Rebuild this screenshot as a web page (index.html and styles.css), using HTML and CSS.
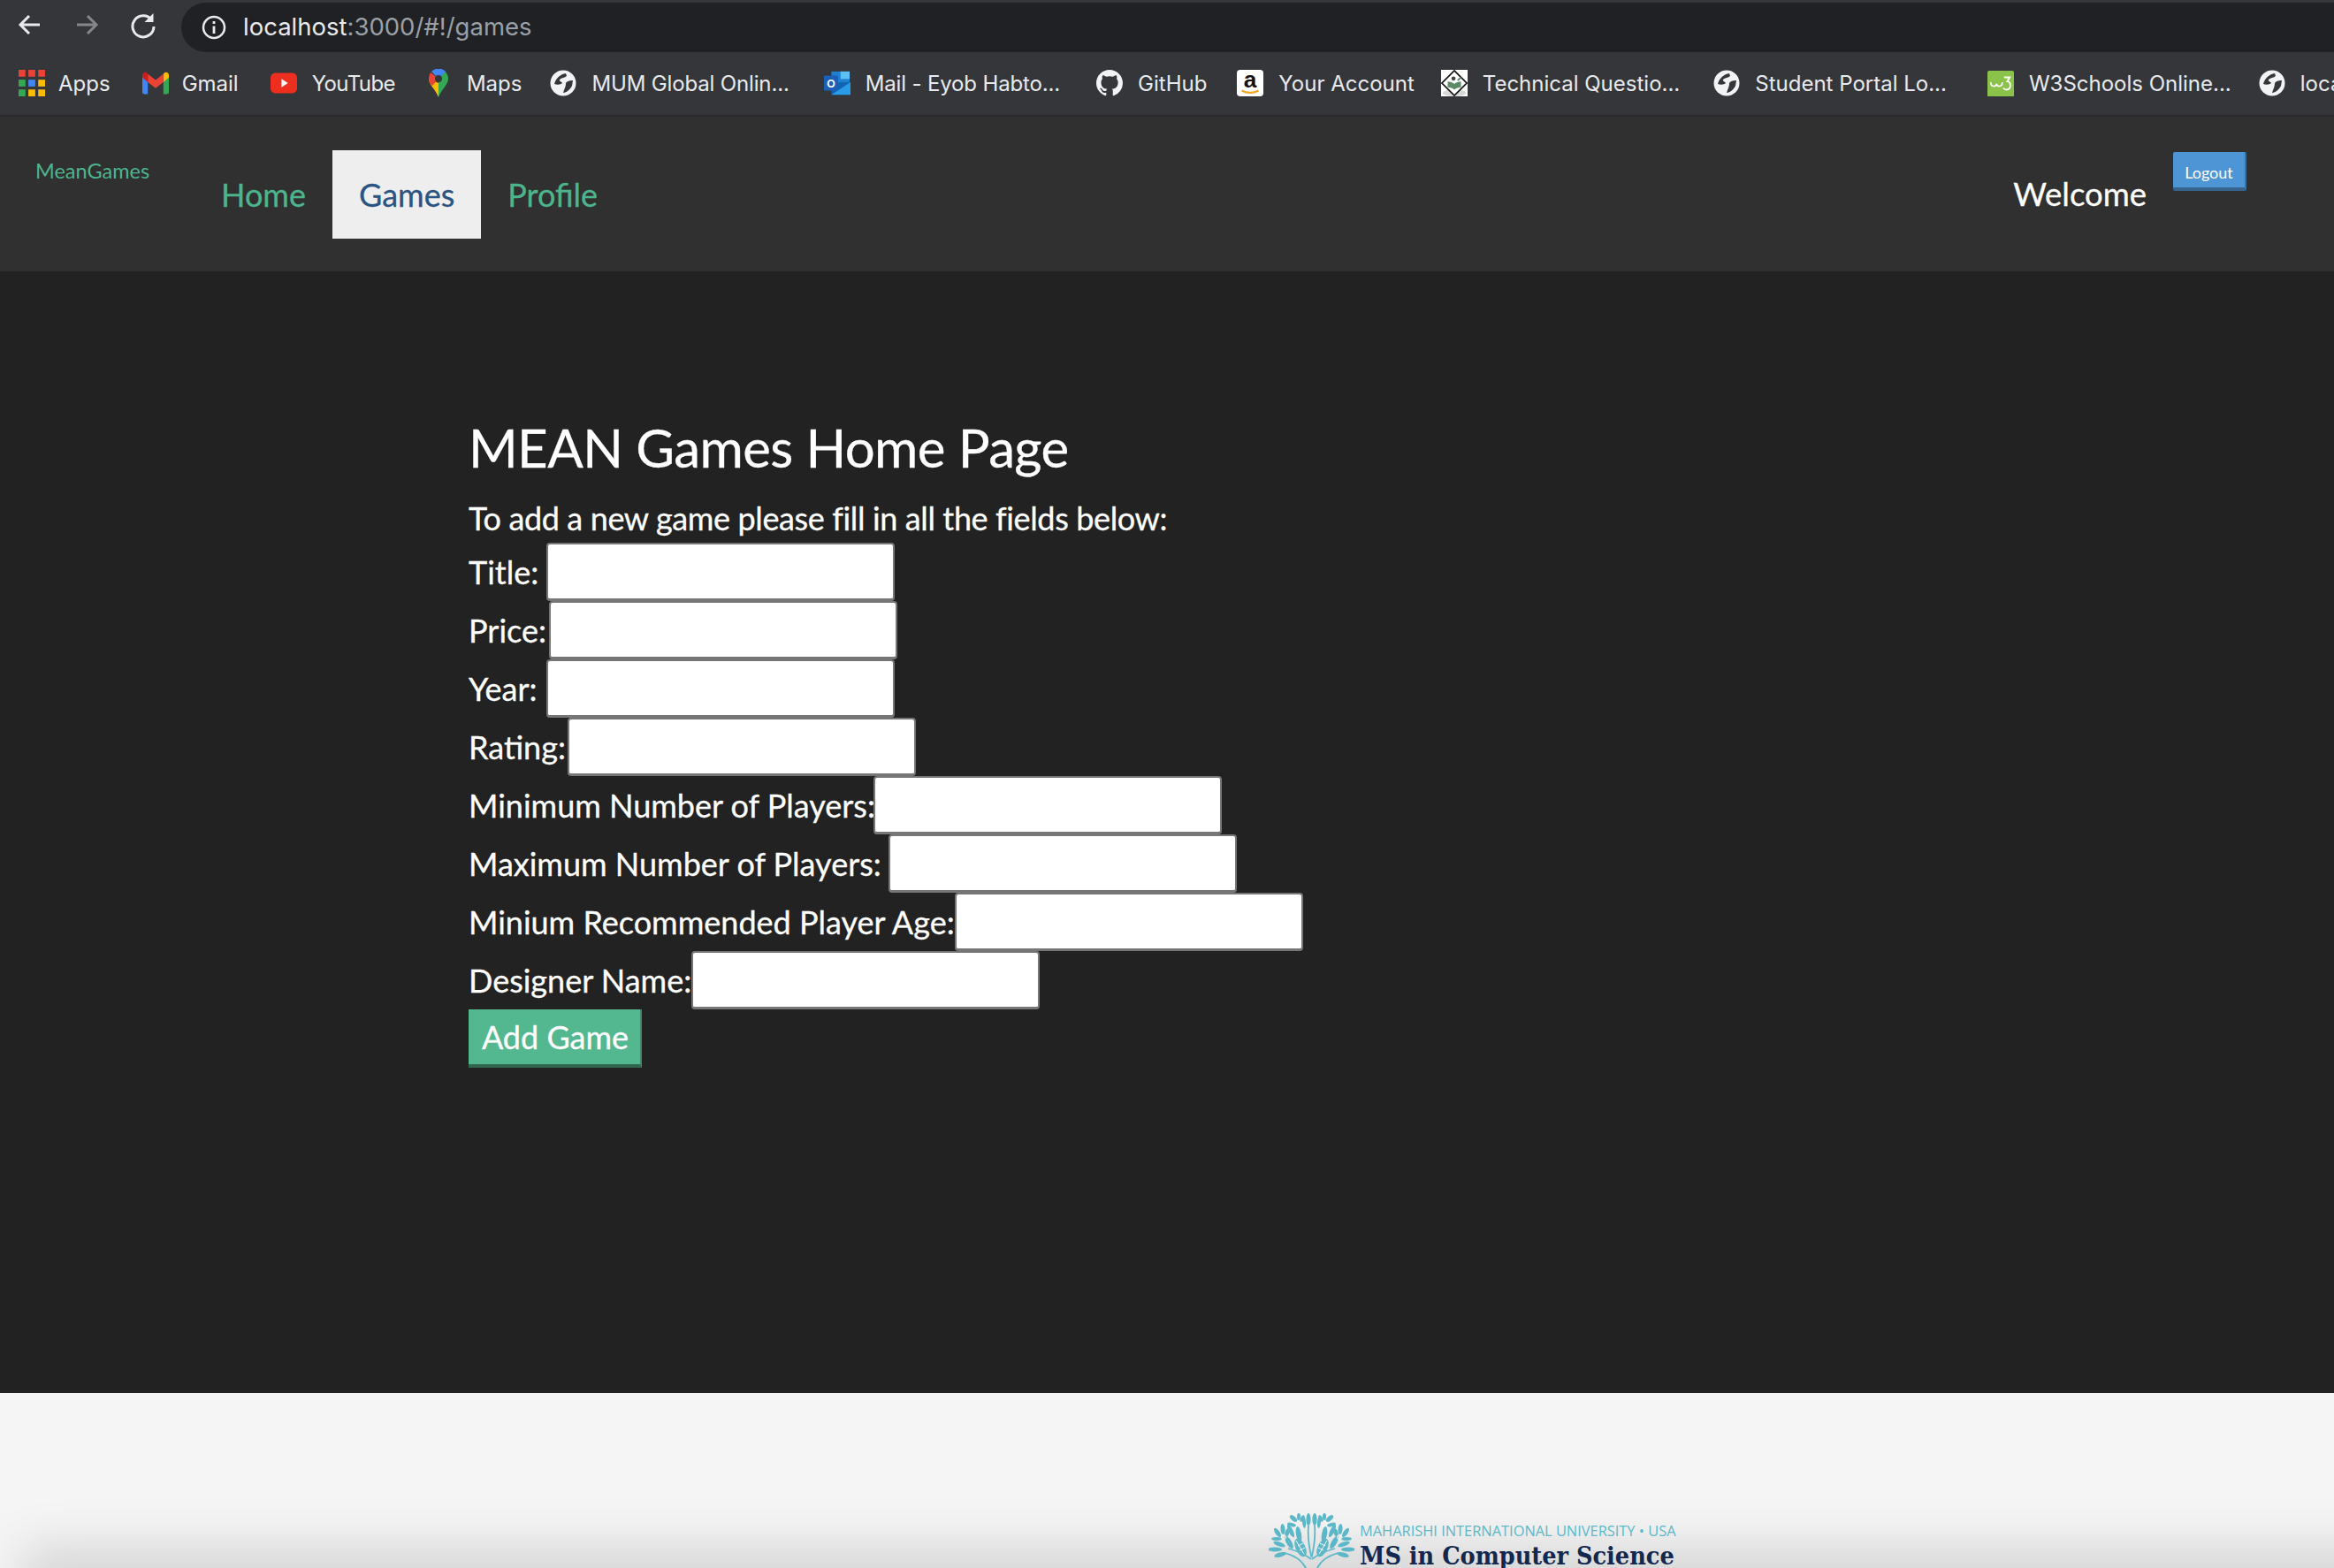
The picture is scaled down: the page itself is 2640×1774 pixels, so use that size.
FILE: index.html
```html
<!DOCTYPE html>
<html lang="en">
<head>
<meta charset="utf-8">
<title>MeanGames</title>
<link rel="stylesheet" href="styles.css">
</head>
<body>
<svg class="defs" width="0" height="0" aria-hidden="true">
  <symbol id="globe" viewBox="0 0 30 30">
    <circle cx="15" cy="15" r="14.500" fill="#f1f3f4"/>
    <path d="M18 4C12 5 7 9 5 16c3 1 7 1 9-1-1-2-4-2-3-4 2-2 6-2 8-4z" fill="#35363a"/>
    <path d="M26 12c-4 0-8 1-8 4s-2 6-3 10c4 0 8-4 10-8z" fill="#35363a"/>
  </symbol>
  <g id="half-tree">
    <g fill="#5cb8c9">
      <ellipse cx="45" cy="7" rx="2.600" ry="7"/>
      <ellipse cx="40" cy="10" rx="2" ry="7" transform="rotate(-5 40 10)"/>
      <ellipse cx="34" cy="4" rx="2" ry="4"/>
      <ellipse cx="28" cy="6" rx="2.500" ry="5" transform="rotate(-50 28 6)"/>
      <ellipse cx="38" cy="6" rx="2" ry="4" transform="rotate(25 38 6)"/>
      <ellipse cx="26" cy="13" rx="5" ry="2" transform="rotate(15 26 13)"/>
      <ellipse cx="34" cy="24" rx="3" ry="9" transform="rotate(-10 34 24)"/>
      <ellipse cx="25" cy="20" rx="2.500" ry="8" transform="rotate(-25 25 20)"/>
      <ellipse cx="16" cy="18" rx="2.500" ry="6" transform="rotate(-5 16 18)"/>
      <ellipse cx="10" cy="22" rx="2.500" ry="6" transform="rotate(-35 10 22)"/>
      <ellipse cx="9" cy="29" rx="6" ry="2"/>
      <ellipse cx="21" cy="22" rx="2.500" ry="5" transform="rotate(20 21 22)"/>
      <ellipse cx="12" cy="35" rx="7" ry="2.500" transform="rotate(20 12 35)"/>
      <ellipse cx="7" cy="41" rx="8" ry="2.500"/>
      <ellipse cx="13" cy="47" rx="7" ry="2.500" transform="rotate(-15 13 47)"/>
      <ellipse cx="23" cy="33" rx="3" ry="8" transform="rotate(-30 23 33)"/>
      <ellipse cx="36" cy="39" rx="5.500" ry="11" transform="rotate(-25 36 39)"/>
    </g>
    <g fill="none" stroke="#f5f5f5" stroke-width="1">
      <path d="M31 31 41 48M33 37l6-3M35 42l6-3"/>
      <circle cx="34" cy="12" r="2.500"/>
      <circle cx="17" cy="27" r="2.500"/>
    </g>
    <g fill="none" stroke="#5cb8c9" stroke-width="1.800">
      <path d="M48.500 50C45 36 44 26 45 14M18 45c12 3 20 9 24 17M22 40c8 2 18 6 26 12"/>
    </g>
  </g>
</svg>

<header class="chrome">
  <div class="toolbar">
    <svg class="tool" viewBox="0 0 32 32"><path d="M27 16H6M15 6 5 16l10 10" fill="none" stroke="#e8eaed" stroke-width="3"/></svg>
    <svg class="tool" viewBox="0 0 32 32"><path d="M5 16h21M17 6l10 10-10 10" fill="none" stroke="#85878a" stroke-width="3"/></svg>
    <svg class="tool" viewBox="0 0 32 32"><path d="M25.500 10.500A12 12 0 1 0 28 18" fill="none" stroke="#e8eaed" stroke-width="3"/><path d="M27.500 3v10h-10z" fill="#e8eaed"/></svg>
    <div class="omnibox">
      <svg class="info" viewBox="0 0 28 28"><circle cx="14" cy="14" r="12" fill="none" stroke="#e8eaed" stroke-width="2.500"/><path d="M14 12.500V21M14 7v3" stroke="#e8eaed" stroke-width="2.800" fill="none"/></svg>
      <span class="url">localhost<span class="url-dim">:3000/#!/games</span></span>
    </div>
  </div>
  <nav class="bookmarks">
    <a class="bm bm-apps">
      <svg class="ico" viewBox="0 0 27 27"><g fill="#ea4335"><rect width="7" height="7"/><rect x="10" width="7" height="7"/><rect x="20" width="7" height="7"/></g><g><rect y="10" width="7" height="7" fill="#34a853"/><rect x="10" y="10" width="7" height="7" fill="#4285f4"/><rect x="20" y="10" width="7" height="7" fill="#fbbc05"/><rect y="20" width="7" height="7" fill="#34a853"/><rect x="10" y="20" width="7" height="7" fill="#fbbc05"/><rect x="20" y="20" width="7" height="7" fill="#fbbc05"/></g></svg>
      <span>Apps</span>
    </a>
    <a class="bm bm-gmail">
      <svg class="ico" viewBox="0 0 29 24"><path d="M0 3v19a2 2 0 0 0 2 2h4V11z" fill="#4285f4"/><path d="M29 3v19a2 2 0 0 1-2 2h-4V11z" fill="#34a853"/><path d="M23 2v9l6-5V3a3 3 0 0 0-5-2z" fill="#fbbc05"/><path d="M6 2v9l8.500 6.500L23 11V2l-8.500 6.500z" fill="#ea4335"/><path d="M0 3v3l6 5V2L5 1A3 3 0 0 0 0 3z" fill="#c5221f"/></svg>
      <span>Gmail</span>
    </a>
    <a class="bm bm-yt">
      <svg class="ico" viewBox="0 0 29 22"><rect width="29" height="22" rx="5" fill="#ee2f20"/><path d="M12 6.500v9l7-4.500z" fill="#fff"/></svg>
      <span>YouTube</span>
    </a>
    <a class="bm bm-maps">
      <svg class="ico ico-tall" viewBox="0 0 22 32"><path d="M11 0a11 11 0 0 1 11 11c0 7-7 11-11 21z" fill="#34a853"/><path d="M11 32C7 22 0 18 0 11L11 16z" fill="#fbbc05"/><path d="M2 4 11 11 4 19C1 16 0 14 0 11c0-3 1-5 2-7z" fill="#ea4335"/><path d="M3 3a11 11 0 0 1 16 0l-8 8z" fill="#4285f4"/><circle cx="11" cy="11" r="4" fill="#35363a"/></svg>
      <span>Maps</span>
    </a>
    <a class="bm bm-mum"><svg class="ico"><use href="#globe"/></svg><span>MUM Global Onlin...</span></a>
    <a class="bm bm-mail">
      <svg class="ico" viewBox="0 0 32 28"><rect x="9" width="22" height="22" fill="#1f7fd1"/><rect x="20" width="11" height="9" fill="#5cc0f5"/><path d="M9 13h23v15H9z" fill="#0f64b4"/><path d="M9 28l23-15v15z" fill="#2a9be6"/><rect y="5" width="17" height="18" rx="1" fill="#1b5fb8"/><text x="8.500" y="19" class="ol">O</text></svg>
      <span>Mail - Eyob Habto...</span>
    </a>
    <a class="bm bm-gh">
      <svg class="ico" viewBox="0 0 16 16"><path fill="#f1f3f4" d="M8 0C3.580 0 0 3.580 0 8c0 3.540 2.290 6.530 5.470 7.590.4.070.55-.17.55-.38 0-.19-.01-.82-.01-1.490-2.010.37-2.530-.49-2.690-.94-.09-.23-.48-.94-.82-1.130-.28-.15-.68-.52-.01-.53.63-.01 1.080.58 1.230.82.72 1.210 1.870.87 2.330.66.070-.52.28-.87.51-1.070-1.780-.2-3.640-.89-3.640-3.950 0-.87.31-1.590.82-2.150-.08-.2-.36-1.020.08-2.120 0 0 .67-.21 2.200.82.64-.18 1.320-.27 2-.27.68 0 1.360.09 2 .27 1.530-1.040 2.200-.82 2.200-.82.44 1.100.16 1.920.08 2.120.51.56.82 1.270.82 2.150 0 3.070-1.870 3.750-3.650 3.950.29.25.54.73.54 1.480 0 1.070-.01 1.930-.01 2.200 0 .21.15.46.55.38A8.013 8.013 0 0 0 16 8c0-4.420-3.580-8-8-8z"/></svg>
      <span>GitHub</span>
    </a>
    <a class="bm bm-amz">
      <svg class="ico" viewBox="0 0 32 32"><rect width="32" height="32" rx="4" fill="#fff"/><text x="16" y="21" class="amz">a</text><path d="M6 25c6 3.500 14 3.500 20 0" fill="none" stroke="#f5a623" stroke-width="2.500"/></svg>
      <span>Your Account</span>
    </a>
    <a class="bm bm-tech">
      <svg class="ico" viewBox="0 0 32 32"><rect width="32" height="32" fill="#fff"/><ellipse cx="16" cy="28" rx="14" ry="4" fill="#d8d8d8"/><path d="M16 1 31 16 16 31 1 16z" fill="#fff" stroke="#111" stroke-width="1.800"/><circle cx="15" cy="10.500" r="2.500" fill="#444"/><path d="M8 14c3 0 6 1 8 3 2-2 5-3 8-3v7c-3 0-6 1-8 3-2-2-5-3-8-3z" fill="#5d8a68"/><path d="M20 13l4-4" stroke="#5d8a68" stroke-width="2"/></svg>
      <span>Technical Questio...</span>
    </a>
    <a class="bm bm-portal"><svg class="ico"><use href="#globe"/></svg><span>Student Portal Lo...</span></a>
    <a class="bm bm-w3">
      <svg class="ico" viewBox="0 0 32 32"><rect width="32" height="32" y="1" rx="2" fill="#8bc34a"/><path d="M4 15c0 6 6 6 7 2 1 4 7 4 7-2" fill="none" stroke="#fff" stroke-width="1.800"/><path d="M20 9h7l-3 5c5 0 5 10-1 10-2 0-3-1-4-2" fill="none" stroke="#fff" stroke-width="2"/></svg>
      <span>W3Schools Online...</span>
    </a>
    <a class="bm"><svg class="ico"><use href="#globe"/></svg><span>localhost</span></a>
  </nav>
</header>

<nav class="site-nav">
  <a class="brand">MeanGames</a>
  <ul class="tabs">
    <li><a class="tab">Home</a></li>
    <li><a class="tab tab-active">Games</a></li>
    <li><a class="tab">Profile</a></li>
  </ul>
  <div class="user">
    <span class="welcome">Welcome</span>
    <button class="logout" type="button">Logout</button>
  </div>
</nav>

<main class="content">
  <h1 class="title">MEAN Games Home Page</h1>
  <p class="intro">To add a new game please fill in all the fields below:</p>
  <form class="game-form">
    <div class="field"><label>Title: </label><input class="box" type="text"></div>
    <div class="field field-price"><label>Price:</label><input class="box" type="text"></div>
    <div class="field field-year"><label>Year: </label><input class="box" type="text"></div>
    <div class="field field-rating"><label>Rating:</label><input class="box" type="text"></div>
    <div class="field field-min"><label>Minimum Number of Players:</label><input class="box" type="text"></div>
    <div class="field field-max"><label>Maximum Number of Players: </label><input class="box" type="text"></div>
    <div class="field"><label>Minium Recommended Player Age:</label><input class="box" type="text"></div>
    <div class="field"><label>Designer Name:</label><input class="box" type="text"></div>
    <button class="add" type="button">Add Game</button>
  </form>
</main>

<footer class="footer">
  <div class="logo">
    <svg class="tree" viewBox="0 0 97 62">
      <use href="#half-tree"/>
      <use href="#half-tree" transform="matrix(-1 0 0 1 97 0)"/>
    </svg>
    <div class="logo-text">
      <div class="uni">MAHARISHI INTERNATIONAL UNIVERSITY • USA</div>
      <div class="ms">MS in Computer Science</div>
    </div>
  </div>
</footer>
</body>
</html>
```

FILE: styles.css
```css
* { box-sizing: border-box; }
html, body { margin: 0; padding: 0; }
body { width: 2640px; height: 1774px; overflow: hidden; background: #f5f5f5; font-family: "Lato", "Liberation Sans", sans-serif; color: #fff; }
.defs { display: block; height: 0; width: 0; }

/* browser chrome */
.chrome { background: #35363a; height: 132px; border-bottom: 2px solid #29292b; font-family: "Inter", "Liberation Sans", sans-serif; }
.toolbar { height: 58px; display: flex; align-items: flex-start; padding: 3px 0 0 18px; }
.tool { width: 32px; height: 32px; margin-top: 9px; flex: none; margin-right: 32px; }
.tool:nth-child(3) { margin-right: 27px; }
.omnibox { flex: 1; height: 56px; background: #202124; border-radius: 28px 0 0 28px; display: flex; align-items: center; padding-left: 23px; }
.info { width: 28px; height: 28px; margin-right: 19px; flex: none; }
.url { font-size: 27.500px; color: #e8eaed; white-space: nowrap; position: relative; top: -1px; }
.url-dim { color: #9aa0a6; }

.bookmarks { height: 72px; display: flex; align-items: center; padding-left: 21px; white-space: nowrap; font-size: 24px; color: #e8eaed; }
.bm { display: flex; align-items: center; gap: 17px; margin-right: 34px; flex: none; }
.ico { width: 30px; height: 30px; flex: none; display: block; }
.ico-tall { height: 32px; width: 22px; }
.ol { font: 700 13px "Liberation Sans", sans-serif; fill: #fff; text-anchor: middle; }
.amz { font: 700 28px "Liberation Sans", sans-serif; fill: #111; text-anchor: middle; }
.bm-apps { gap: 15px; margin-right: 36px; }
.bm-gmail { gap: 15px; margin-right: 36px; }
.bm-yt span { letter-spacing: -0.600px; }
.bm-yt { margin-right: 38px; }
.bm-maps { gap: 21px; margin-right: 32px; }
.bm-mum { margin-right: 39px; }
.bm-mum span, .bm-mail span { letter-spacing: -0.150px; }
.bm-mail { margin-right: 41px; }
.bm-amz { margin-right: 30px; }
.bm-tech { margin-right: 38px; }
.bm-portal { margin-right: 46px; }
.bm-w3 { margin-right: 31px; }

/* site navigation */
.site-nav { height: 175px; background: #303030; display: flex; align-items: flex-start; padding: 38px 50px 0 40px; }
.brand { font-size: 23.500px; color: #4db58e; margin-top: 9px; width: 180px; flex: none; }
.tabs { list-style: none; margin: 0; padding: 0; display: flex; flex: 1; }
.tab { display: block; height: 100px; padding: 0 30px; line-height: 100px; font-size: 36px; color: #4db58e; -webkit-text-stroke: 0.300px currentColor; }
.tab-active { background: #eee; color: #2a5482; }
.user { display: flex; align-items: flex-start; gap: 30px; margin-right: 49px; }
.welcome { font-size: 36.500px; line-height: 98px; -webkit-text-stroke: 0.300px currentColor; }
.logout { width: 83px; height: 44px; margin-top: 2px; padding: 6px 0 0; background: #4d95d4; border: 0; border-right: 2px solid #3a7099; border-bottom: 4px solid #36648c; border-radius: 2px; color: #fff; font: 400 18px "Lato", sans-serif; }

/* main */
.content { height: 1269px; background: #222; padding: 163px 0 0 530px; font-size: 36px; -webkit-text-stroke: 0.300px currentColor; }
.title { margin: 0; font-size: 60px; font-weight: 400; line-height: 72px; letter-spacing: -0.600px; }
.intro { margin: 16px 0 0; line-height: 56px; letter-spacing: -0.370px; }
.game-form { display: flex; flex-direction: column; align-items: flex-start; }
.field { height: 66px; white-space: pre; }
.field label { line-height: 66px; }
.field-price label { margin-right: 3px; }
.field-year label { margin-right: 1px; }
.field-rating label { margin-right: 2px; }
.field-min label { margin-right: -2px; }
.field-max label { margin-right: -1px; }
.box { width: 394px; height: 66px; padding: 0; vertical-align: top; background: #fff; border: 2px solid #767676; border-bottom-width: 3px; border-radius: 4px; }
.add { width: 196px; height: 66px; padding: 0 0 0 2px; background: #53b78f; border: 0; border-right: 2px solid #3f8a6c; border-bottom: 4px solid #33664f; color: #fff; font: 400 36px "Lato", sans-serif; -webkit-text-stroke: 0.300px currentColor; }

/* footer */
.footer { height: 198px; position: relative; overflow: hidden; background: #f5f5f5; padding: 0 0 0 1435px; }
.footer::after { content: ""; position: absolute; left: 45px; right: -200px; bottom: -30px; height: 30px; box-shadow: 0 0 60px 20px rgba(0, 0, 0, 0.15); }
.logo { display: flex; align-items: flex-start; position: relative; z-index: 1; padding-top: 136px; }
.tree { width: 97px; height: 62px; flex: none; margin-right: 6px; }
.logo-text { padding-top: 9px; }
.uni { font: 400 16.400px "Open Sans", sans-serif; color: #5cb8c9; white-space: nowrap; line-height: 22px; }
.ms { font: 700 28.500px "DejaVu Serif", "Liberation Serif", serif; font-stretch: condensed; color: #12284f; white-space: nowrap; line-height: 35px; }
```
